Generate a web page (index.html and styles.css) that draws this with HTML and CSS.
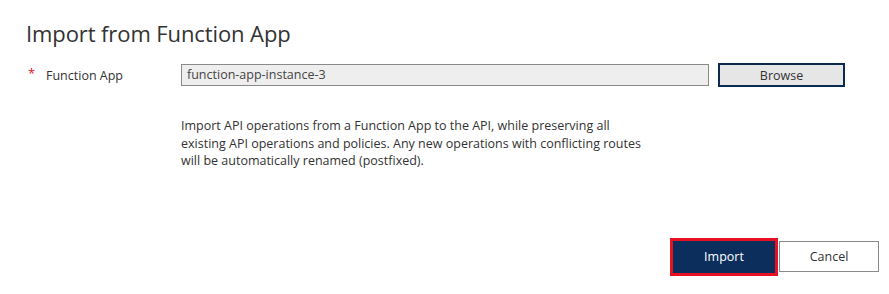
FILE: index.html
```html
<!DOCTYPE html>
<html>
<head>
<meta charset="utf-8">
<link rel="stylesheet" href="styles.css">
</head>
<body>
<div class="dialog">
  <h1 class="title">Import from Function App</h1>
  <div class="field-row">
    <div class="label"><span class="req">*</span><span>Function App</span></div>
    <div class="input">function-app-instance-3</div>
    <button class="browse">Browse</button>
  </div>
  <p class="desc">Import API operations from a Function App to the API, while preserving all existing API operations and policies. Any new operations with conflicting routes will be automatically renamed (postfixed).</p>
  <div class="footer">
    <button class="btn-import">Import</button>
    <button class="btn-cancel">Cancel</button>
  </div>
</div>
</body>
</html>
```
FILE: styles.css
```css
html, body {
  margin: 0;
  padding: 0;
  background: #ffffff;
}
body {
  font-family: "Open Sans", "Noto Sans", sans-serif;
  color: #333333;
  width: 889px;
  height: 294px;
  overflow: hidden;
}
.dialog {
  padding: 0 10px 0 26px;
  display: flex;
  flex-direction: column;
}
.title {
  margin: 18px 0 0 0;
  font-weight: 400;
  font-size: 22px;
  line-height: 30px;
  color: #333333;
  letter-spacing: -0.1px;
}
.field-row {
  display: flex;
  align-items: center;
  margin-top: 15px;
  height: 24px;
}
.label {
  width: 155px;
  display: flex;
  align-items: center;
  font-size: 12.5px;
  color: #333333;
}
.req {
  color: #e81123;
  width: 20px;
  padding-left: 2px;
  box-sizing: border-box;
  font-size: 13px;
  position: relative;
  top: -2px;
}
.input {
  width: 528px;
  height: 22px;
  box-sizing: border-box;
  border: 1px solid #8a8a8a;
  background: #eeeeee;
  font-size: 12.5px;
  line-height: 20px;
  padding-left: 5px;
  color: #444444;
}
.browse {
  margin-left: 9px;
  width: 127px;
  height: 24px;
  box-sizing: border-box;
  border: 2px solid #0b2a4f;
  background: #e6e6e6;
  font-family: inherit;
  font-size: 12.5px;
  color: #333333;
  padding: 0;
}
.desc {
  margin: 30px 0 0 155px;
  width: 470px;
  font-size: 12.5px;
  line-height: 17.5px;
  color: #333333;
}
.footer {
  display: flex;
  justify-content: flex-end;
  align-items: center;
  margin-top: 68px;
}
.btn-import {
  width: 108px;
  height: 38px;
  box-sizing: border-box;
  border: 3px solid #e81123;
  background: #0b2e5c;
  color: #ffffff;
  font-family: inherit;
  font-size: 12.5px;
  padding: 0;
}
.btn-cancel {
  margin-left: 1px;
  width: 100px;
  height: 31px;
  box-sizing: border-box;
  border: 1px solid #8a8a8a;
  background: #ffffff;
  color: #333333;
  font-family: inherit;
  font-size: 12.5px;
  padding: 0;
}
```
